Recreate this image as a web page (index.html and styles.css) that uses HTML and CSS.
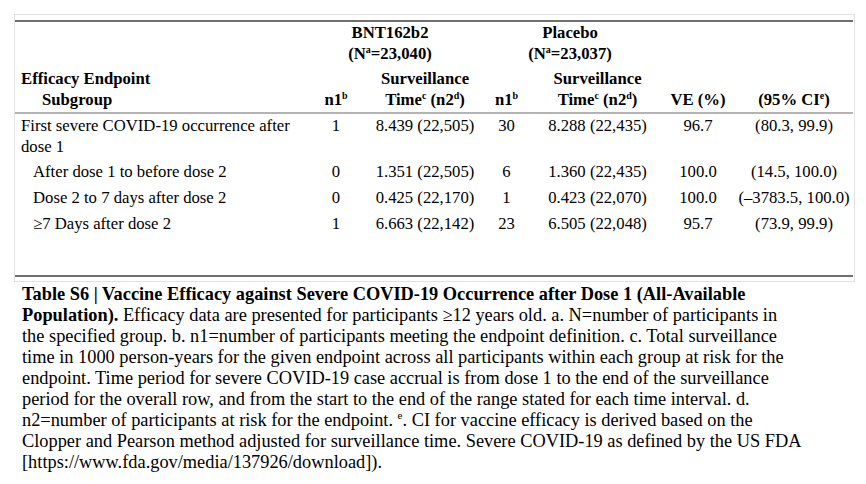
FILE: index.html
```html
<!DOCTYPE html>
<html lang="en">
<head>
<meta charset="utf-8">
<title>Table S6</title>
<link rel="stylesheet" href="styles.css">
</head>
<body>
<div class="page">
  <div class="frame">
    <table class="ve-table">
      <colgroup>
        <col class="c-end"><col class="c-n1a"><col class="c-sta"><col class="c-n1b"><col class="c-stb"><col class="c-ve"><col class="c-ci">
      </colgroup>
      <thead>
        <tr class="grp">
          <th></th>
          <th colspan="2">BNT162b2<br>(N<sup>a</sup>=23,040)</th>
          <th colspan="2">Placebo<br>(N<sup>a</sup>=23,037)</th>
          <th></th>
          <th></th>
        </tr>
        <tr class="sub">
          <th class="left">Efficacy Endpoint<br><span class="ind2">Subgroup</span></th>
          <th>n1<sup>b</sup></th>
          <th>Surveillance<br>Time<sup>c</sup> (n2<sup>d</sup>)</th>
          <th>n1<sup>b</sup></th>
          <th>Surveillance<br>Time<sup>c</sup> (n2<sup>d</sup>)</th>
          <th>VE (%)</th>
          <th>(95% CI<sup>e</sup>)</th>
        </tr>
      </thead>
      <tbody>
        <tr>
          <td class="left">First severe COVID-19 occurrence after dose 1</td>
          <td>1</td><td>8.439 (22,505)</td><td>30</td><td>8.288 (22,435)</td><td>96.7</td><td>(80.3, 99.9)</td>
        </tr>
        <tr>
          <td class="left ind">After dose 1 to before dose 2</td>
          <td>0</td><td>1.351 (22,505)</td><td>6</td><td>1.360 (22,435)</td><td>100.0</td><td>(14.5, 100.0)</td>
        </tr>
        <tr>
          <td class="left ind">Dose 2 to 7 days after dose 2</td>
          <td>0</td><td>0.425 (22,170)</td><td>1</td><td>0.423 (22,070)</td><td>100.0</td><td>(–3783.5, 100.0)</td>
        </tr>
        <tr class="last">
          <td class="left ind">≥7 Days after dose 2</td>
          <td>1</td><td>6.663 (22,142)</td><td>23</td><td>6.505 (22,048)</td><td>95.7</td><td>(73.9, 99.9)</td>
        </tr>
      </tbody>
    </table>
  </div>
  <p class="caption"><b>Table S6 | Vaccine Efficacy against Severe COVID-19 Occurrence after Dose 1 (All-Available<br>Population).</b> Efficacy data are presented for participants ≥12 years old. a. N=number of participants in<br>the specified group. b. n1=number of participants meeting the endpoint definition. c. Total surveillance<br>time in 1000 person-years for the given endpoint across all participants within each group at risk for the<br>endpoint. Time period for severe COVID-19 case accrual is from dose 1 to the end of the surveillance<br>period for the overall row, and from the start to the end of the range stated for each time interval. d.<br>n2=number of participants at risk for the endpoint. <sup>e</sup>. CI for vaccine efficacy is derived based on the<br>Clopper and Pearson method adjusted for surveillance time. Severe COVID-19 as defined by the US FDA<br>[https://www.fda.gov/media/137926/download]).</p>
</div>
</body>
</html>
```

FILE: styles.css
```css
html, body {
  margin: 0;
  padding: 0;
  background: #ffffff;
}

body {
  font-family: "Liberation Serif", "Times New Roman", serif;
  font-size: 16.7px;
  line-height: 21px;
  color: #000000;
}

.page {
  padding: 14px 0 0 14px;
}

.frame {
  width: 839px;
  border: 1px solid #e2e2e2;
  padding: 5px 0 4px 0;
}

.ve-table {
  width: 838px;
  border-collapse: collapse;
  table-layout: fixed;
  border-top: 2px solid #6f6f6f;
  border-bottom: 2px solid #6f6f6f;
}

.c-end { width: 286px; }
.c-n1a { width: 70px; }
.c-sta { width: 108px; }
.c-n1b { width: 55px; }
.c-stb { width: 127px; }
.c-ve  { width: 74px; }
.c-ci  { width: 118px; }

.ve-table th,
.ve-table td {
  padding: 0 2px;
  text-align: center;
  vertical-align: top;
  white-space: nowrap;
}

.ve-table th {
  font-weight: bold;
}

.ve-table .grp th {
  padding-top: 0;
  padding-bottom: 4px;
}

.ve-table .sub th {
  vertical-align: bottom;
  padding-top: 0;
  padding-bottom: 2px;
  border-bottom: 2px solid #b4b4b4;
}

.ve-table td {
  padding-top: 1px;
  padding-bottom: 4px;
}

.ve-table tbody tr:first-child td {
  padding-bottom: 3px;
}

.ve-table tbody tr.last td {
  padding-bottom: 41px;
}

.ve-table .left {
  text-align: left;
  padding-left: 6px;
  white-space: normal;
}

.ve-table .ind {
  padding-left: 18px;
}

.ind2 {
  padding-left: 21px;
}

sup {
  font-size: 10px;
  line-height: 0;
  vertical-align: 6px;
}

.caption {
  margin: 2px 0 0 8px;
  width: 840px;
  font-size: 18.35px;
  line-height: 21px;
  white-space: nowrap;
}

.caption sup {
  font-size: 11px;
  vertical-align: 7px;
}
```
